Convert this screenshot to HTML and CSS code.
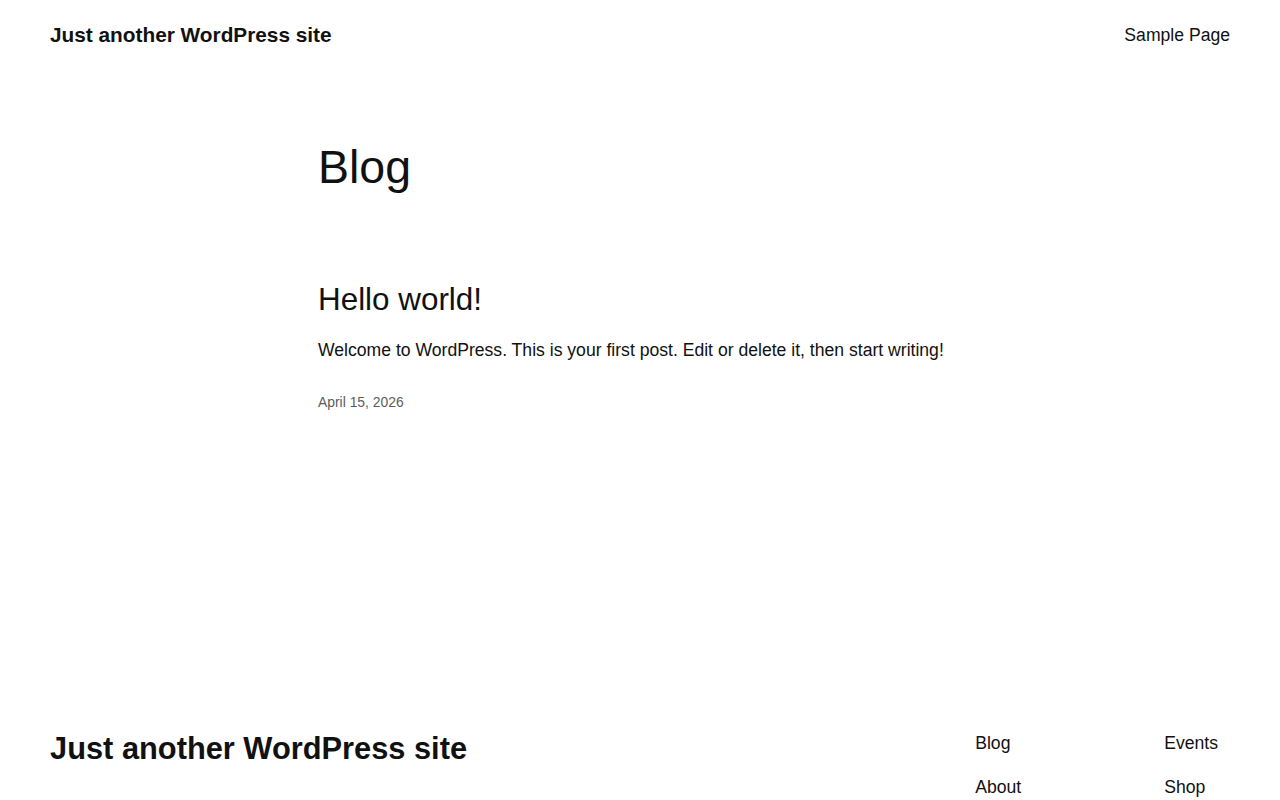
FILE: index.html
```html
<!DOCTYPE html>
<html lang="en">
<head>
<meta charset="utf-8">
<title>Blog – Just another WordPress site</title>
<link rel="stylesheet" href="styles.css">
</head>
<body>
<header class="site-header">
  <a class="site-title" href="#">Just another WordPress site</a>
  <nav class="header-nav"><a href="#">Sample Page</a></nav>
</header>
<main class="content">
  <h1 class="page-title">Blog</h1>
  <article class="post">
    <h2 class="post-title"><a href="#">Hello world!</a></h2>
    <p class="post-excerpt">Welcome to WordPress. This is your first post. Edit or delete it, then start writing!</p>
    <div class="post-date">April 15, 2026</div>
  </article>
</main>
<footer class="site-footer">
  <a class="footer-title" href="#">Just another WordPress site</a>
  <nav class="footer-nav">
    <a href="#">Blog</a>
    <a href="#">Events</a>
    <a href="#">About</a>
    <a href="#">Shop</a>
  </nav>
</footer>
</body>
</html>
```
FILE: styles.css
```css
* { box-sizing: border-box; }
html, body { margin: 0; padding: 0; }
body {
  font-family: "Liberation Sans", Arial, sans-serif;
  color: #111111;
  background: #ffffff;
  width: 1280px;
  height: 800px;
  overflow: hidden;
}
a { color: inherit; text-decoration: none; }

.site-header {
  display: flex;
  justify-content: space-between;
  align-items: flex-start;
  padding: 21px 50px 0;
  height: 70px;
}
.site-title {
  font-weight: 700;
  font-size: 20.8px;
  line-height: 28px;
}
.header-nav a {
  font-size: 17.6px;
  line-height: 28px;
}

.content {
  width: 644px;
  margin: 0 auto;
  height: 661px;
  padding-top: 70px;
}
.page-title {
  font-weight: 400;
  font-size: 46.5px;
  line-height: 1.2;
  margin: 0 0 85px;
}
.post-title {
  font-weight: 400;
  font-size: 31.4px;
  line-height: 1.2;
  margin: 0 0 19px;
}
.post-excerpt {
  font-size: 17.6px;
  line-height: 1.5;
  margin: 0 0 30px;
}
.post-date {
  font-size: 13.9px;
  color: #5c5c5c;
}

.site-footer {
  display: flex;
  justify-content: space-between;
  align-items: flex-start;
  padding: 0 50px;
}
.footer-title {
  font-weight: 700;
  font-size: 30.8px;
  line-height: 1.2;
}
.footer-nav {
  display: grid;
  grid-template-columns: 189px auto;
  row-gap: 17px;
  font-size: 17.6px;
  line-height: 27px;
  margin-top: -1px;
  margin-right: 12px;
}
```
